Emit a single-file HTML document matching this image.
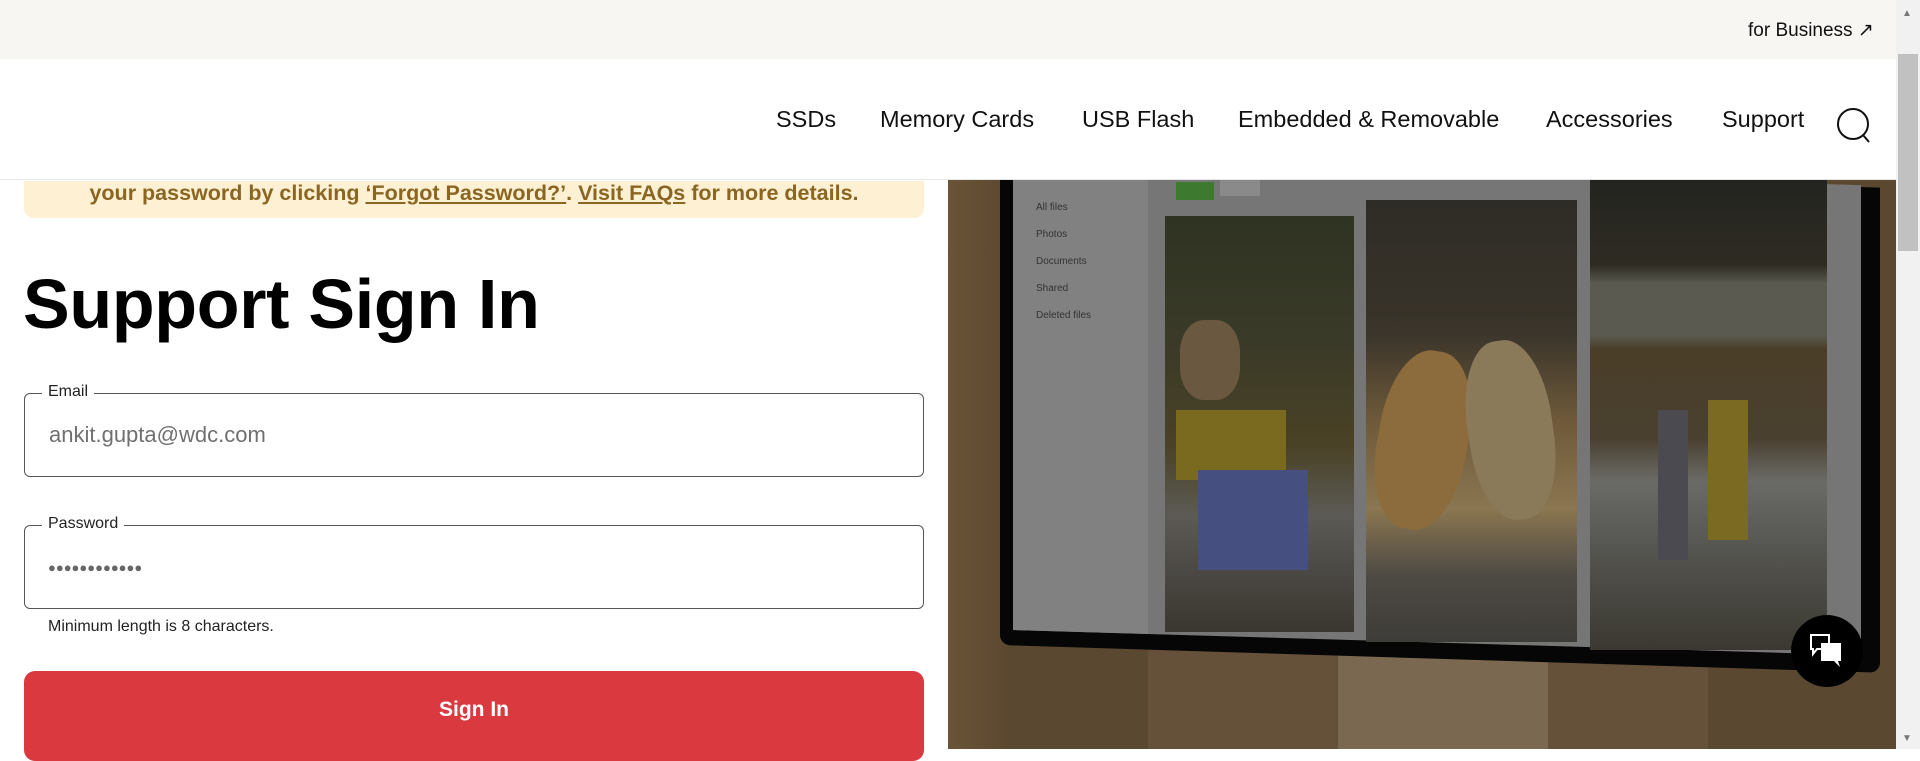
<!DOCTYPE html>
<html><head><meta charset="utf-8"><style>
*{margin:0;padding:0;box-sizing:border-box}
body{width:1920px;height:749px;overflow:hidden;background:#fff;font-family:"Liberation Sans",Arial,sans-serif;position:relative;color:#000}
.a{position:absolute}
.nav{font-size:23.5px;top:106px;color:#111;white-space:nowrap}
</style></head><body>
<!-- right image -->
<div class="a" style="left:948px;top:180px;width:948px;height:569px;background:#5b4830;overflow:hidden">
  <div class="a" style="left:0;top:0;width:60px;height:569px;background:linear-gradient(90deg,#6a5436,#5c4830)"></div>
  <div class="a" style="left:200px;top:440px;width:560px;height:140px;background:#65513a"></div>
  <div class="a" style="left:390px;top:470px;width:210px;height:110px;background:#7a6850"></div>
  <!-- bezel -->
  <div class="a" style="left:52px;top:-20px;width:880px;height:485px;background:#060606;transform:skewY(1.8deg);transform-origin:0 0;border-radius:0 0 10px 10px"></div>
  <!-- screen -->
  <div class="a" style="left:65px;top:-20px;width:848px;height:470px;background:#767676;transform:skewY(1.7deg);transform-origin:0 0"></div>
  <div class="a" style="left:65px;top:-20px;width:135px;height:470px;background:#818181;transform:skewY(1.7deg);transform-origin:0 0"></div>
  <div class="a" style="left:88px;top:14px;font-size:10px;color:#333;line-height:27px">All files<br>Photos<br>Documents<br>Shared<br>Deleted files</div>
  <div class="a" style="left:228px;top:2px;width:38px;height:18px;background:#3d7a2f"></div>
  <div class="a" style="left:272px;top:0px;width:40px;height:16px;background:#8a8a8a"></div>
  <!-- tiles -->
  <div class="a" style="left:217px;top:36px;width:189px;height:416px;background:linear-gradient(180deg,#2f3322 0%,#3a3a28 30%,#4a4226 55%,#5b5a55 72%,#3a3630 100%)"></div>
  <div class="a" style="left:232px;top:140px;width:60px;height:80px;border-radius:40%;background:#6b5840"></div>
  <div class="a" style="left:228px;top:230px;width:110px;height:70px;background:#7a6a20"></div>
  <div class="a" style="left:250px;top:290px;width:110px;height:100px;background:#465080"></div>
  <div class="a" style="left:418px;top:20px;width:211px;height:442px;background:linear-gradient(180deg,#2e2c26 0%,#3a342a 30%,#6e5a3a 50%,#8a7650 70%,#4e4a44 85%,#3e3c38 100%)"></div>
  <div class="a" style="left:430px;top:170px;width:90px;height:180px;border-radius:45%;background:#8c6c3c;transform:rotate(10deg)"></div>
  <div class="a" style="left:520px;top:160px;width:85px;height:180px;border-radius:45%;background:#8a7a5a;transform:rotate(-8deg)"></div>
  <div class="a" style="left:642px;top:0;width:237px;height:470px;background:linear-gradient(180deg,#232420 0%,#2e2b22 18%,#5a5a50 22%,#5a5a50 33%,#4a3e28 36%,#4a4030 55%,#6a6a66 64%,#5a5a56 75%,#3a3830 100%)"></div>
  <div class="a" style="left:760px;top:220px;width:40px;height:140px;background:#7a6a22"></div>
  <div class="a" style="left:710px;top:230px;width:30px;height:150px;background:#4a4a50"></div>
</div>
<!-- top bar -->
<div class="a" style="left:0;top:0;width:1896px;height:59px;background:#f7f6f3"></div>
<div class="a" style="left:1748px;top:19px;font-size:19px;color:#111">for Business ↗</div>
<!-- nav -->
<div class="a" style="left:0;top:59px;width:1896px;height:121px;background:#fff;border-bottom:1px solid #e6e6e6"></div>
<div class="a nav" style="left:776px">SSDs</div>
<div class="a nav" style="left:880px">Memory Cards</div>
<div class="a nav" style="left:1082px">USB Flash</div>
<div class="a nav" style="left:1238px">Embedded &amp; Removable</div>
<div class="a nav" style="left:1546px">Accessories</div>
<div class="a nav" style="left:1722px">Support</div>
<svg class="a" style="left:1834px;top:106px" width="40" height="38" viewBox="0 0 40 38"><circle cx="19" cy="18" r="15" fill="none" stroke="#111" stroke-width="2"/><path d="M29 29 L35 36" stroke="#111" stroke-width="2"/></svg>
<!-- banner -->
<div class="a" style="left:24px;top:181px;width:900px;height:37px;background:#fdf0d3;border-radius:0 0 10px 10px;color:#8a6622;font-weight:bold;font-size:21.5px;text-align:center;line-height:22px;padding-top:1px;white-space:nowrap">your password by clicking <u>‘Forgot Password?’</u>. <u>Visit FAQs</u> for more details.</div>
<!-- heading -->
<div class="a" style="left:23px;top:264px;font-size:70px;font-weight:bold;line-height:80px;letter-spacing:-0.3px">Support Sign In</div>
<!-- email -->
<div class="a" style="left:24px;top:393px;width:900px;height:84px;border:1.5px solid #555;border-radius:6px"></div>
<div class="a" style="left:42px;top:383px;padding:0 6px;background:#fff;font-size:16px;color:#222">Email</div>
<div class="a" style="left:49px;top:422px;font-size:22px;color:#707070">ankit.gupta@wdc.com</div>
<!-- password -->
<div class="a" style="left:24px;top:525px;width:900px;height:84px;border:1.5px solid #555;border-radius:6px"></div>
<div class="a" style="left:42px;top:515px;padding:0 6px;background:#fff;font-size:16px;color:#222">Password</div>
<div class="a" style="left:48px;top:560px;font-size:13px;color:#666;letter-spacing:0px">●●●●●●●●●●●●</div>
<div class="a" style="left:48px;top:618px;font-size:16px;color:#222">Minimum length is 8 characters.</div>
<!-- button -->
<div class="a" style="left:24px;top:671px;width:900px;height:90px;background:#d9393f;border-radius:11px;color:#fff;font-weight:bold;font-size:21px;text-align:center;line-height:78px">Sign In</div>
<!-- chat -->
<div class="a" style="left:1791px;top:615px;width:72px;height:72px;border-radius:50%;background:#000"></div>
<svg class="a" style="left:1807px;top:631px" width="40" height="40" viewBox="0 0 40 40"><path d="M4 4 H22 V18 H10 L6 23 V18 H4 Z" fill="none" stroke="#fff" stroke-width="2"/><path d="M14 12 H34 V30 H31 L33 36 L27 30 H14 Z" fill="#fff"/></svg>
<!-- scrollbar -->
<div class="a" style="left:1896px;top:0;width:24px;height:749px;background:#f1f1f1"></div>
<div class="a" style="left:1898px;top:54px;width:20px;height:197px;background:#c1c1c1"></div>
<div class="a" style="left:1902px;top:8px;font-size:10px;color:#777">▲</div>
<div class="a" style="left:1902px;top:733px;font-size:10px;color:#777">▼</div>
</body></html>
